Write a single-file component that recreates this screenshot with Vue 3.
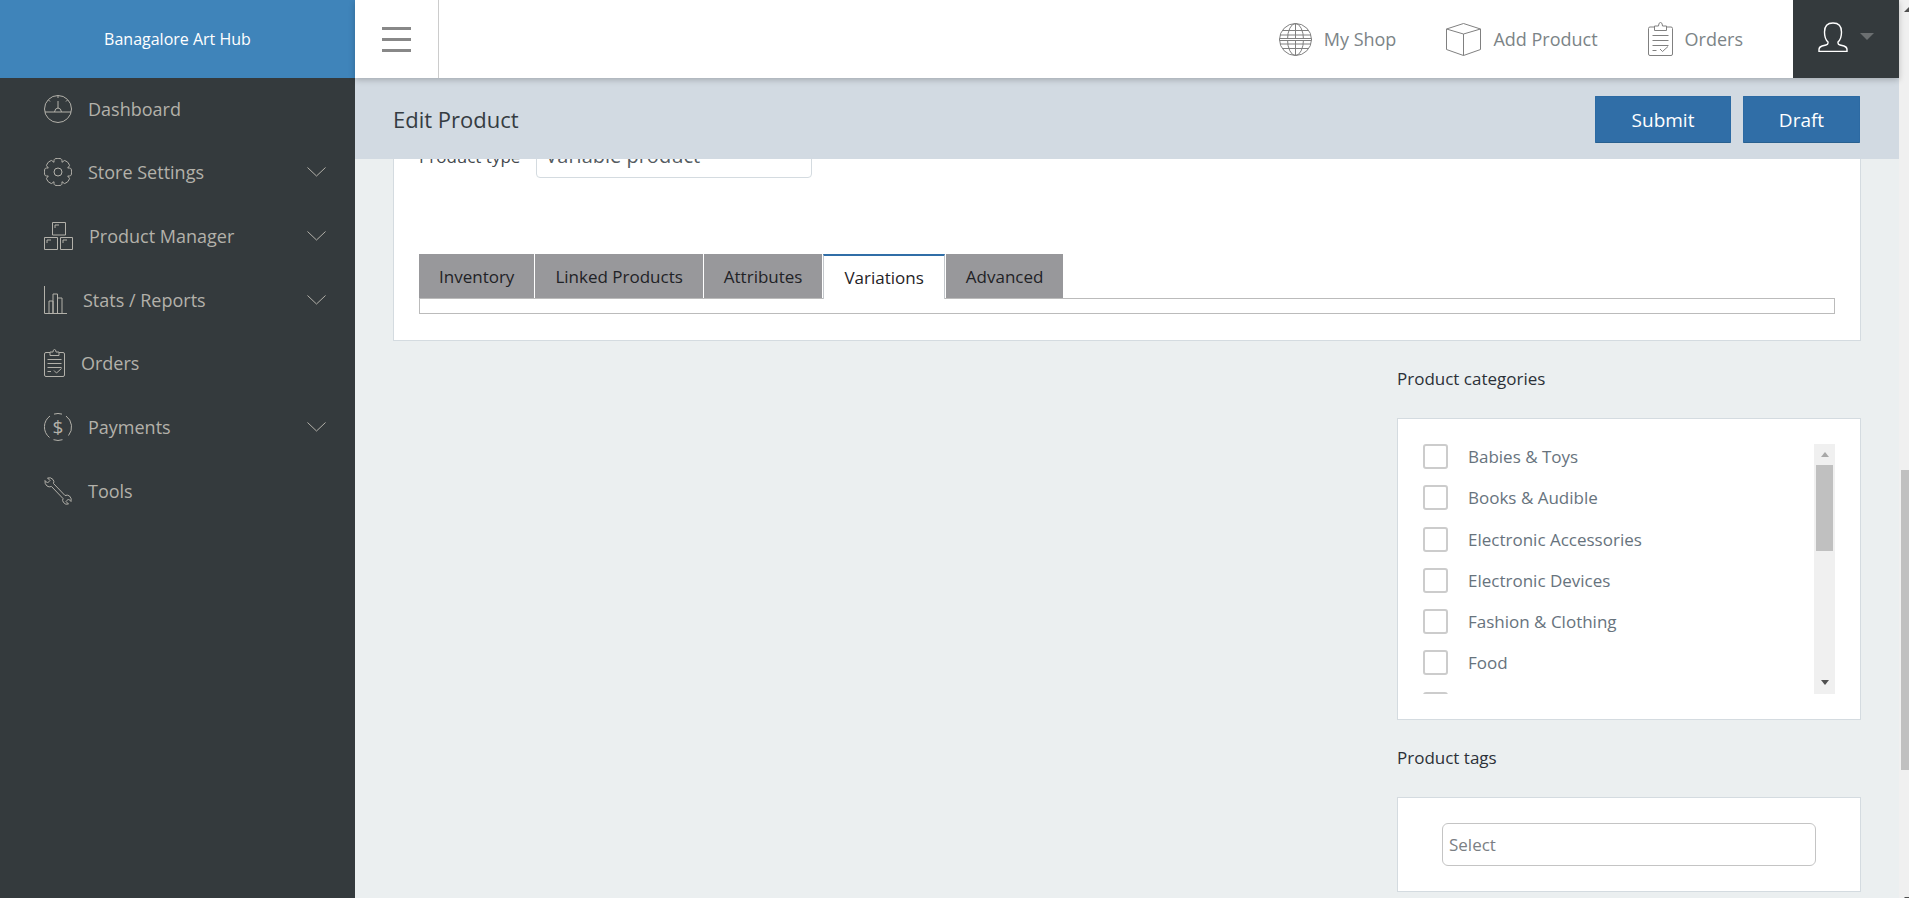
<template>
  <div class="page">
    <aside class="sidebar">
      <div class="brand">Banagalore Art Hub</div>
      <nav class="side-nav">
        <a v-for="item in navItems" :key="item.label" class="side-item">
          <svg class="side-icon" :width="item.w" height="28" :viewBox="`0 0 ${item.w} 28`">
            <path v-for="d in item.paths" :key="d" :d="d" />
            <text v-if="item.label === 'Payments'" x="14" y="20.5" text-anchor="middle" class="dollar">$</text>
          </svg>
          <span>{{ item.label }}</span>
          <svg v-if="item.sub" class="chevron" width="19" height="10" viewBox="0 0 19 10">
            <path d="M0.5 0.5 L9.5 9 L18.5 0.5" />
          </svg>
        </a>
      </nav>
    </aside>

    <main class="main">
      <header class="topbar">
        <button class="burger"><i></i><i></i><i></i></button>
        <div class="top-links">
          <a class="top-link">
            <svg width="33" height="33" viewBox="0 0 33 33">
              <circle cx="16.5" cy="16.5" r="16" />
              <ellipse cx="16.5" cy="16.5" rx="8" ry="16" />
              <path d="M16.5 0.5V32.5M3.5 7.5H29.5M1 12H32M1 21H32M3.5 25.5H29.5" />
              <path class="band" d="M0.5 15.5H32.5V17.5H0.5Z" />
            </svg>
            <span>My Shop</span>
          </a>
          <a class="top-link">
            <svg width="35" height="33" viewBox="0 0 35 33">
              <path d="M17.5 0.5L34.5 6V26.5L17.5 32.5L0.5 26.5V6ZM0.5 6L17.5 11V32.5M17.5 11L34.5 6" />
            </svg>
            <span>Add Product</span>
          </a>
          <a class="top-link">
            <svg width="25" height="34" viewBox="0 0 25 34">
              <path d="M6.5 5H2Q0.5 5 0.5 6.5V32Q0.5 33.5 2 33.5H23Q24.5 33.5 24.5 32V6.5Q24.5 5 23 5H18.5" />
              <path d="M6.5 8.5V4H10.5Q10.5 0.5 12.5 0.5Q14.5 0.5 14.5 4H18.5V8.5Z" />
              <path d="M4.5 13.5H20.5M4.5 18.5H20.5M4.5 23.5H20.5M4.5 28.5H8.5M12 27L14.5 29.5L20 24.5" />
            </svg>
            <span>Orders</span>
          </a>
        </div>
        <div class="user-box">
          <svg class="user-icon" width="30" height="30" viewBox="0 0 30 30">
            <path d="M10 20V21Q10 22.5 8 23L4 24Q1 25 1 27.5V29.5H29V27.5Q29 25 26 24L22 23Q20 22.5 20 21V20Q23.5 17 23.5 10Q23.5 1 15 1Q6.5 1 6.5 10Q6.5 17 10 20Z" />
          </svg>
          <span class="caret"></span>
        </div>
      </header>

      <div class="page-head">
        <h1>Edit Product</h1>
        <div class="head-actions">
          <button class="btn btn-submit">Submit</button>
          <button class="btn btn-draft">Draft</button>
        </div>
      </div>

      <div class="content">
        <section class="card">
          <div class="type-row">
            <label>Product type</label>
            <div class="type-select">Variable product</div>
          </div>
          <div class="tabs">
            <div
              v-for="tab in tabs"
              :key="tab"
              class="tab"
              :class="{ active: tab === 'Variations' }"
            >{{ tab }}</div>
          </div>
          <div class="tab-panel"></div>
        </section>

        <div class="side-col">
          <h2>Product categories</h2>
          <div class="box cat-box">
            <div class="cat-rows">
              <div v-for="(cat, i) in categories" :key="i" class="cat-row">
                <span class="check"></span>
                <span>{{ cat }}</span>
              </div>
            </div>
            <div class="mini-scroll">
              <span class="mini-up"></span>
              <span class="mini-thumb"></span>
              <span class="mini-down"></span>
            </div>
          </div>

          <h2>Product tags</h2>
          <div class="box tags-box">
            <div class="tags-input">Select</div>
          </div>
        </div>
      </div>
    </main>

    <div class="scrollbar">
      <span class="sb-up"></span>
      <span class="sb-thumb"></span>
      <span class="sb-down"></span>
    </div>
  </div>
</template>

<script setup>
// gear outline, 8 rounded teeth
function gearPath() {
  const cx = 14, cy = 14
  const pt = (r, a) => `${(cx + r * Math.cos(a)).toFixed(2)} ${(cy + r * Math.sin(a)).toFixed(2)}`
  const step = (Math.PI * 2) / 8
  let d = ''
  for (let i = 0; i < 8; i++) {
    const a = i * step - Math.PI / 8
    d += (i ? 'L' : 'M') + pt(10.5, a)
    d += 'Q' + pt(14.4, a + step * 0.12) + ' ' + pt(13.5, a + step * 0.3)
    d += 'Q' + pt(14.2, a + step * 0.5) + ' ' + pt(13.5, a + step * 0.7)
    d += 'Q' + pt(14.4, a + step * 0.88) + ' ' + pt(10.5, a + step)
  }
  return d + 'Z'
}

const ring = 'M0.5 14A13.5 13.5 0 1 0 27.5 14A13.5 13.5 0 1 0 0.5 14Z'

const navItems = [
  {
    label: 'Dashboard', w: 28,
    paths: [ring, 'M1 17H27M14 6V13M14 0.5V3M4.5 5L6 6.5M23.5 5L22 6.5M10.5 17Q11 13 14 13Q17 13 17.5 17']
  },
  {
    label: 'Store Settings', w: 28, sub: true,
    paths: [gearPath(), 'M10 14A4 4 0 1 0 18 14A4 4 0 1 0 10 14Z']
  },
  {
    label: 'Product Manager', w: 29, sub: true,
    paths: [
      'M8.5 0.5H21.5V13H8.5ZM11 6V3H15',
      'M0.5 15.5H13.5V27.5H0.5ZM3 21V18H7',
      'M16.5 15.5H28.5V27.5H16.5ZM19 21V18H23'
    ]
  },
  {
    label: 'Stats / Reports', w: 23, sub: true,
    paths: ['M0.5 0V27.5H23', 'M5 27V15H9V27M9 27V8H13.5V27M13.5 27V12H18V27']
  },
  {
    label: 'Orders', w: 21,
    paths: [
      'M6 3.5H2Q0.5 3.5 0.5 5V26Q0.5 27.5 2 27.5H19Q20.5 27.5 20.5 26V5Q20.5 3.5 19 3.5H15',
      'M6 6.5V3H9Q9 0.5 10.5 0.5Q12 0.5 12 3H15V6.5Z',
      'M3.5 10.5H17.5M3.5 14.5H17.5M3.5 18.5H17.5M3.5 22.5H7M10 21.5L12.5 24L17.5 19.5'
    ]
  },
  {
    label: 'Payments', w: 28, sub: true,
    paths: [
      'M10 1.1A13.5 13.5 0 0 1 18 1.1M22 3A13.5 13.5 0 0 1 24.5 22.5',
      'M18.5 26.7A13.5 13.5 0 0 1 9.5 26.7M5.5 24.5A13.5 13.5 0 0 1 6 3'
    ]
  },
  {
    label: 'Tools', w: 28,
    paths: [
      'M1 3.5L3.5 6L6 3.5L3.5 1Q7 0 9 2.5Q10.5 4.5 9.5 6.5L21 18.5Q23.5 17.5 25.5 19Q28 21.5 27 24.5L24.5 22L22 24.5L24.5 27Q21.5 28 19.5 25.5Q18 23.5 19 21.5L7.5 9.5Q5 10.5 3 9Q0.5 7 1 3.5Z'
    ]
  }
]

const tabs = ['Inventory', 'Linked Products', 'Attributes', 'Variations', 'Advanced']

const categories = [
  'Babies & Toys',
  'Books & Audible',
  'Electronic Accessories',
  'Electronic Devices',
  'Fashion & Clothing',
  'Food',
  ''
]
</script>

<style>
html, body {
  margin: 0;
  height: 100%;
  overflow: hidden;
}
</style>

<style scoped>
* {
  box-sizing: border-box;
}

.page {
  display: flex;
  height: 898px;
  overflow: hidden;
  font-family: "Open Sans", sans-serif;
  background: #ebeff0;
}

/* sidebar */
.sidebar {
  width: 355px;
  flex: none;
  background: #343a3d;
}

.brand {
  height: 78px;
  display: flex;
  align-items: center;
  justify-content: center;
  background: #3f84ba;
  color: #fff;
  font-size: 16px;
}

.side-nav {
  margin-top: -1px;
}

.side-item {
  height: 63.65px;
  display: flex;
  align-items: center;
  gap: 16px;
  padding: 0 29px 0 44px;
  color: #b3b1aa;
  font-size: 18px;
}

.side-icon {
  flex: none;
  fill: none;
  stroke: #b3b1aa;
  stroke-width: 1;
}

.side-icon .dollar {
  fill: #b3b1aa;
  stroke: none;
  font-size: 19px;
  font-family: "Open Sans", sans-serif;
}

.chevron {
  margin-left: auto;
  fill: none;
  stroke: #b3b1aa;
  stroke-width: 1;
}

/* top bar */
.main {
  flex: 1;
  min-width: 0;
  display: flex;
  flex-direction: column;
}

.topbar {
  height: 78px;
  flex: none;
  display: flex;
  background: #fff;
  position: relative;
  z-index: 2;
  box-shadow: 0 2px 6px rgba(0, 0, 0, 0.22);
}

.burger {
  width: 84px;
  border: 0;
  border-right: 1px solid #ccc;
  background: none;
  padding: 0 27px;
  display: flex;
  flex-direction: column;
  justify-content: center;
  gap: 8px;
}

.burger i {
  display: block;
  height: 3px;
  background: #888;
}

.top-links {
  margin-left: auto;
  display: flex;
  align-items: center;
  gap: 50px;
  margin-right: 50px;
}

.top-link {
  display: flex;
  align-items: center;
  gap: 12px;
  color: #7c8487;
  font-size: 18px;
}

.top-link svg {
  fill: none;
  stroke: #808080;
  stroke-width: 1;
}

.top-link .band {
  fill: #fff;
}

.user-box {
  width: 106px;
  background: #343a3d;
  display: flex;
  align-items: center;
  padding: 0 0 5px 25px;
}

.user-icon {
  fill: none;
  stroke: #fff;
  stroke-width: 1.4;
}

.caret {
  margin-left: 12px;
  border-left: 7.5px solid transparent;
  border-right: 7.5px solid transparent;
  border-top: 7px solid #6b6f71;
}

/* page heading */
.page-head {
  height: 81px;
  flex: none;
  display: flex;
  align-items: flex-start;
  justify-content: space-between;
  padding: 18px 39px 0 38px;
  background: #d2dae2;
  position: relative;
  z-index: 1;
}

.page-head h1 {
  margin: 0;
  font-size: 22px;
  font-weight: 400;
  line-height: 47px;
  color: #353c42;
}

.head-actions {
  display: flex;
  gap: 12px;
}

.btn {
  height: 47px;
  border: 1px solid #2c6aa3;
  border-bottom-color: #28608f;
  border-radius: 1px;
  background: #306ea7;
  color: #fff;
  font: 400 19px "Open Sans", sans-serif;
}

.btn-submit {
  width: 136px;
}

.btn-draft {
  width: 117px;
}

/* content */
.content {
  flex: 1;
  min-height: 0;
  overflow: hidden;
  padding: 0 38px;
  display: flex;
  flex-direction: column;
}

.card {
  flex: none;
  margin-top: -50px;
  padding: 24px 25px 26px;
  background: #fff;
  border: 1px solid #d4dbe0;
}

.type-row {
  display: flex;
  align-items: center;
  gap: 16px;
  height: 44px;
  margin-bottom: 76px;
  font-size: 17px;
  color: #43494e;
}

.type-select {
  width: 276px;
  height: 44px;
  line-height: 42px;
  padding: 0 8px;
  background: #fff;
  border: 1px solid #d4dbe0;
  border-radius: 4px;
  font-size: 20px;
  color: #555c62;
}

.tabs {
  display: flex;
  gap: 1px;
}

.tab {
  height: 44px;
  padding: 0 20px;
  display: flex;
  align-items: center;
  background: #98989b;
  color: #1f2226;
  font-size: 17px;
}

.tab.active {
  background: #fff;
  border-top: 2px solid #306ea7;
  border-left: 1px solid #c4c8cc;
  border-right: 1px solid #c4c8cc;
  margin-bottom: -1px;
  height: 45px;
  position: relative;
}

.tab-panel {
  height: 16px;
  border: 1px solid #bbb;
}

.side-col {
  flex: none;
  width: 464px;
  margin-left: auto;
}

.side-col h2 {
  margin: 26px 0 27px;
  font-size: 17px;
  line-height: 24px;
  font-weight: 400;
  color: #2b3138;
}

.box {
  background: #fff;
  border: 1px solid #d4dbe0;
}

.cat-box {
  display: flex;
  padding: 25px;
  height: 302px;
}

.cat-rows {
  flex: 1;
  height: 250px;
  overflow: hidden;
}

.cat-row {
  display: flex;
  align-items: center;
  gap: 20px;
  height: 25px;
  margin-bottom: 16.3px;
  font-size: 17px;
  color: #67737d;
}

.check {
  width: 25px;
  height: 25px;
  flex: none;
  border: 2px solid #ccc;
  border-radius: 3px;
}

.mini-scroll {
  width: 21px;
  height: 250px;
  flex: none;
  background: #f0f0f0;
  display: flex;
  flex-direction: column;
  align-items: center;
}

.mini-up {
  margin-top: 8px;
  border-left: 4.5px solid transparent;
  border-right: 4.5px solid transparent;
  border-bottom: 5px solid #a8a8a8;
}

.mini-thumb {
  width: 17px;
  height: 86px;
  margin-top: 8px;
  background: #c0c0c0;
}

.mini-down {
  margin-top: auto;
  margin-bottom: 9px;
  border-left: 4.5px solid transparent;
  border-right: 4.5px solid transparent;
  border-top: 5px solid #505050;
}

.tags-box {
  height: 95px;
  padding: 25px 44px;
}

.tags-input {
  height: 43px;
  line-height: 41px;
  padding: 0 6px;
  border: 1px solid #c4c4c4;
  border-radius: 6px;
  font-size: 17px;
  color: #7b7f84;
}

/* page scrollbar, clipped by the window edge */
.scrollbar {
  width: 10px;
  flex: none;
  overflow: hidden;
  background: #f0f0f0;
  display: flex;
  flex-direction: column;
  align-items: flex-start;
}

.sb-up {
  margin: 7px 0 0 5px;
  border-left: 5px solid transparent;
  border-right: 5px solid transparent;
  border-bottom: 5px solid #505050;
}

.sb-thumb {
  width: 8px;
  height: 300px;
  flex: none;
  margin: 458px 0 0 2px;
  background: #c0c0c0;
}

.sb-down {
  margin: auto 0 0 5px;
  border-left: 5px solid transparent;
  border-right: 5px solid transparent;
  border-top: 5px solid #505050;
  transform: translateY(4px);
}
</style>
